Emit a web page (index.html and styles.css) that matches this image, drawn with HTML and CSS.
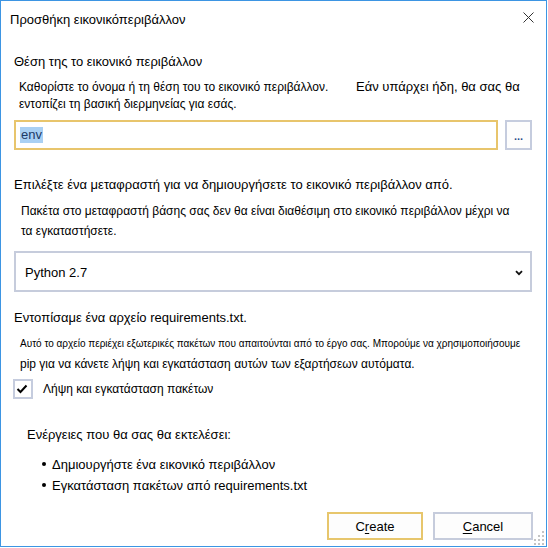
FILE: index.html
```html
<!DOCTYPE html>
<html lang="el">
<head>
<meta charset="utf-8">
<title>Προσθήκη εικονικόπεριβάλλον</title>
<link rel="stylesheet" href="styles.css">
</head>
<body>
<div class="window">
  <div class="titlebar">
    <span class="title">Προσθήκη εικονικόπεριβάλλον</span>
    <svg class="close" width="11" height="11" viewBox="0 0 11 11"><path d="M0.5 0.5 L10.5 10.5 M10.5 0.5 L0.5 10.5" stroke="#333" stroke-width="1" fill="none"/></svg>
  </div>
  <div class="content">
    <div class="heading h-first">Θέση της το εικονικό περιβάλλον</div>
    <div class="desc desc-loc">
      <div class="desc-line"><span class="desc-main">Καθορίστε το όνομα ή τη θέση του το εικονικό περιβάλλον.</span><span class="aside">Εάν υπάρχει ήδη, θα σας θα</span></div>
      <div class="desc-line">εντοπίζει τη βασική διερμηνείας για εσάς.</div>
    </div>
    <div class="path-row">
      <div class="input"><span class="sel">env</span></div>
      <div class="browse">...</div>
    </div>
    <div class="heading h-interp">Επιλέξτε ένα μεταφραστή για να δημιουργήσετε το εικονικό περιβάλλον από.</div>
    <div class="desc desc-interp">Πακέτα στο μεταφραστή βάσης σας δεν θα είναι διαθέσιμη στο εικονικό περιβάλλον μέχρι να<br>τα εγκαταστήσετε.</div>
    <div class="select">
      <span class="select-text">Python 2.7</span>
      <svg class="chevron" width="8" height="6" viewBox="0 0 8 6"><path d="M1 1.2 L4 4.2 L7 1.2" stroke="#111" stroke-width="1.8" fill="none"/></svg>
    </div>
    <div class="heading h-req">Εντοπίσαμε ένα αρχείο requirements.txt.</div>
    <div class="small">Αυτό το αρχείο περιέχει εξωτερικές πακέτων που απαιτούνται από το έργο σας. Μπορούμε να χρησιμοποιήσουμε</div>
    <div class="desc pip">pip για να κάνετε λήψη και εγκατάσταση αυτών των εξαρτήσεων αυτόματα.</div>
    <div class="check">
      <span class="box"><svg width="16" height="16" viewBox="0 0 16 16"><path d="M2.5 8 L5.5 11 L11.5 4.5" stroke="#000" stroke-width="2" fill="none"/></svg></span>
      <span class="check-label">Λήψη και εγκατάσταση πακέτων</span>
    </div>
    <div class="heading h-actions">Ενέργειες που θα σας θα εκτελέσει:</div>
    <ul class="bullets">
      <li>Δημιουργήστε ένα εικονικό περιβάλλον</li>
      <li>Εγκατάσταση πακέτων από requirements.txt</li>
    </ul>
    <div class="buttons">
      <button class="btn btn-primary">C<u>r</u>eate</button>
      <button class="btn btn-cancel"><u>C</u>ancel</button>
    </div>
  </div>
  <svg class="grip" width="14" height="14" viewBox="0 0 14 14">
    <g fill="#c4c4c4">
      <rect x="11" y="0" width="2" height="2"/>
      <rect x="7" y="4" width="2" height="2"/><rect x="11" y="4" width="2" height="2"/>
      <rect x="3" y="8" width="2" height="2"/><rect x="7" y="8" width="2" height="2"/><rect x="11" y="8" width="2" height="2"/>
      <rect x="3" y="12" width="2" height="2"/><rect x="7" y="12" width="2" height="2"/><rect x="11" y="12" width="2" height="2"/>
    </g>
  </svg>
</div>
</body>
</html>
```
FILE: styles.css
```css
* { box-sizing: border-box; }
html, body { margin: 0; padding: 0; background: #fff; }
body { font-family: "Liberation Sans", Arial, sans-serif; color: #000; }

.window {
  position: relative;
  width: 547px;
  height: 547px;
  border: 1px solid #3d95e3;
  background: #fff;
}

.titlebar {
  display: flex;
  justify-content: space-between;
  align-items: flex-start;
  height: 30px;
  padding: 9px 12px 0 9px;
  font-size: 13px;
  line-height: 20px;
}
.close { margin-top: 2px; }

.content { padding: 0 14px 0 13px; }

.heading { font-size: 13px; line-height: 18px; }
.h-first { margin-top: 22px; }

.desc { font-size: 12px; line-height: 17px; }
.desc-loc { margin-top: 7px; padding-left: 5px; }
.desc-line { white-space: nowrap; }
.desc-main { display: inline-block; width: 337px; }
.aside { font-size: 13px; line-height: 17px; }

.path-row { display: flex; gap: 7px; height: 30px; margin-top: 7px; }
.input {
  flex: 1;
  display: flex;
  align-items: center;
  padding-left: 4px;
  border: 2px solid #e8c56c;
  background: #fff;
}
.sel {
  background: #a9d0f3;
  color: #1c3a66;
  font-size: 13px;
  line-height: 16px;
  padding: 0 1px;
}
.browse {
  width: 27px;
  display: flex;
  align-items: flex-end;
  justify-content: center;
  padding-bottom: 6px;
  border: 2px solid #c5ccde;
  background: #fdfdfd;
  color: #2a4f8a;
  font-size: 11px;
  line-height: 11px;
  font-weight: bold;
}

.h-interp { margin-top: 26px; }
.desc-interp { margin-top: 7px; padding-left: 7px; line-height: 20px; }

.select {
  display: flex;
  align-items: center;
  justify-content: space-between;
  height: 41px;
  margin-top: 10px;
  padding: 2px 7px 0 9px;
  border: 2px solid #c6ccdc;
  background: #fff;
  font-size: 13px;
}

.h-req { margin-top: 17px; }
.small { margin-top: 6px; padding-left: 6px; font-size: 10px; line-height: 21px; white-space: nowrap; }
.pip { padding-left: 6px; line-height: 21px; }

.check {
  display: flex;
  align-items: center;
  gap: 10px;
  height: 20px;
  margin-top: 4px;
  margin-left: -1px;
  font-size: 12px;
  line-height: 20px;
}
.box {
  width: 20px;
  height: 20px;
  border: 2px solid #c5ccde;
  background: #fff;
  display: flex;
}

.h-actions { margin-top: 27px; padding-left: 13px; }

.bullets {
  list-style: none;
  margin: 10px 0 0;
  padding: 0 0 0 28px;
  font-size: 13px;
  line-height: 21px;
}
.bullets li::before {
  content: "";
  display: inline-block;
  width: 4px;
  height: 4px;
  border-radius: 50%;
  background: #000;
  margin-right: 6px;
  vertical-align: 3px;
}

.buttons {
  display: flex;
  justify-content: flex-end;
  gap: 10px;
  margin-top: 16px;
  margin-right: -1px;
}
.btn {
  height: 28px;
  padding: 0;
  font-family: "Liberation Sans", Arial, sans-serif;
  font-size: 13px;
  color: #000;
  background: #fdfdfd;
  border: 2px solid #c6ccdc;
}
.btn u { text-decoration-thickness: 1px; text-underline-offset: 2px; }
.btn-primary { width: 96px; border-color: #e7c66c; }
.btn-cancel { width: 100px; }

.grip { position: absolute; right: 1px; bottom: 1px; }
```
